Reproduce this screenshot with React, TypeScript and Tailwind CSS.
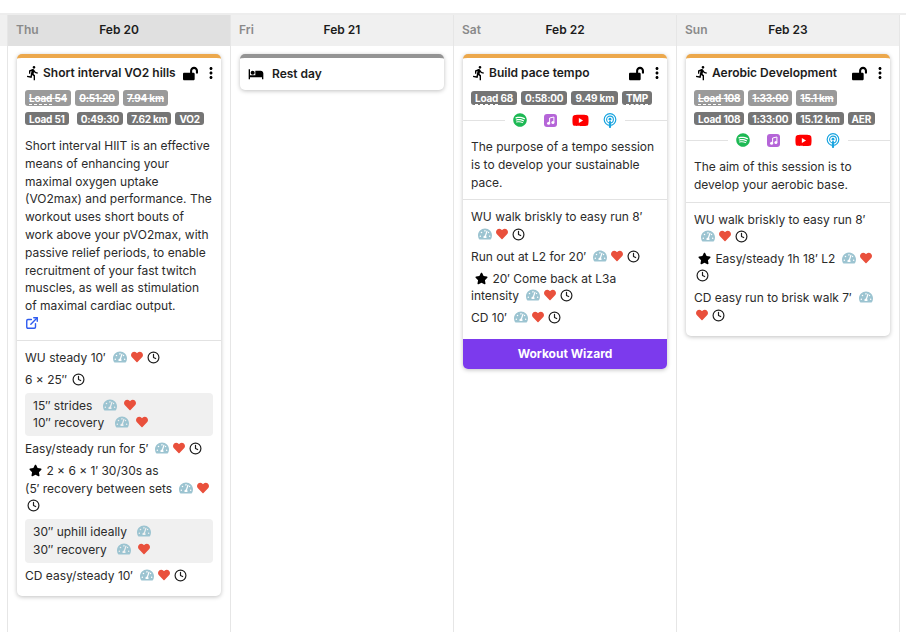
import { ReactNode } from "react";
import { Clock as ClockIcon, ExternalLink } from "lucide-react";
import { FaHeart, FaLockOpen, FaSpotify, FaStar, FaTachometerAlt, FaYoutube } from "react-icons/fa";
import { MdDirectionsRun, MdHotel, MdMoreVert } from "react-icons/md";

interface badge {
  text: string;
  dashed?: boolean;
  extra?: boolean;
}

const Badge = ({ text, old, dashed, extra, tall }: badge & { old?: boolean; tall?: boolean }) => (
  <span
    className={`inline-flex items-center overflow-hidden rounded-[3px] px-[4px] text-[10px] font-bold leading-none tracking-[-0.2px] text-white ${
      old ? "h-[16px] bg-[#9a9a9a] line-through" : "bg-[#757575]"
    } ${!old && tall ? "h-[14px]" : ""} ${!old && !tall ? "h-[13px]" : ""} ${extra ? "mr-[4px]" : ""}`}
  >
    {dashed ? (
      <span className="relative">
        {text.split(" ")[0]}
        <span className="absolute bottom-[-2px] left-0 w-full border-b border-dashed border-white" />
      </span>
    ) : (
      text.split(" ")[0]
    )}
    {text.includes(" ") ? <span className="whitespace-pre"> {text.split(" ").slice(1).join(" ")}</span> : null}
  </span>
);

const Gauge = () => <FaTachometerAlt className="ml-[7px] mr-[2px] inline-block align-[-2px] text-[14px] text-[#9cc4d1]" />;
const Heart = () => <FaHeart className="mx-[2px] inline-block align-[-1px] text-[12px] text-[#e9503c]" />;
const Clock = () => <ClockIcon size={13} strokeWidth={2.2} className="mx-[2px] inline-block align-[-2px] text-[#1f1f1f]" />;
const Star = () => <FaStar className="ml-[4px] mr-[1px] inline-block align-[-2px] text-[13px] text-black" />;

const Step = ({ children, g, h, c }: { children: ReactNode; g?: boolean; h?: boolean; c?: boolean }) => (
  <div className="mt-[4.4px] leading-[17.5px] first:mt-0">
    {children}
    {g ? <Gauge /> : null}
    {h ? <Heart /> : null}
    {c ? <Clock /> : null}
  </div>
);

const Group = ({ children }: { children: ReactNode }) => (
  <div className="mb-[3px] mt-[4.5px] rounded-[4px] bg-[#f0f0f0] px-2 py-[4px]">{children}</div>
);

const Sub = ({ children, g, h }: { children: ReactNode; g?: boolean; h?: boolean }) => (
  <div className="leading-[17.6px]">
    {children} {g ? <Gauge /> : null}
    {h ? <span className="ml-[3px]"><Heart /></span> : null}
  </div>
);

const Media = () => (
  <div className="mb-[11px] mt-[8px] flex h-[14px] items-center">
    <div className="h-px flex-1 bg-[#e2e2e2]" />
    <div className="flex w-[120px] items-center [&>*]:flex [&>*]:w-[30px] [&>*]:justify-center">
      <span>
        <FaSpotify className="text-[14px] text-[#1db954]" />
      </span>
      <span>
        <svg width="13" height="13" viewBox="0 0 13 13">
          <rect width="13" height="13" rx="3" fill="#b565d8" />
          <circle cx="4.6" cy="9.2" r="1.5" fill="#fff" />
          <circle cx="8.9" cy="8.4" r="1.5" fill="#fff" />
          <path d="M5.6 9.2V4l4.3-1v5.4" stroke="#fff" strokeWidth="1" fill="none" />
        </svg>
      </span>
      <span>
        <FaYoutube className="text-[17px] text-[#f00]" />
      </span>
      <span>
        <svg width="14" height="15" viewBox="0 0 14 15" fill="none">
          <circle cx="7" cy="6.5" r="5.8" stroke="#1ba5e0" strokeWidth="1.2" />
          <circle cx="7" cy="6.5" r="3.4" stroke="#1ba5e0" strokeWidth="1.1" />
          <circle cx="7" cy="6.2" r="1.4" fill="#1ba5e0" />
          <rect x="5.9" y="8" width="2.2" height="7" rx="1" fill="#1ba5e0" />
        </svg>
      </span>
    </div>
    <div className="h-px flex-1 bg-[#e2e2e2]" />
  </div>
);

const Card = ({
  title,
  oldBadges,
  badges,
  media,
  about,
  link,
  children,
  wizard,
}: {
  title: string;
  oldBadges?: badge[];
  badges: badge[];
  media?: boolean;
  about: string;
  link?: boolean;
  children: ReactNode;
  wizard?: boolean;
}) => (
  <div className="overflow-hidden rounded-[5px] border-t-4 border-[#eca84c] bg-white shadow-[0_1px_4px_rgba(0,0,0,0.25)]">
    <div className="flex h-[30px] items-center pl-2 pr-px">
      <MdDirectionsRun className="shrink-0 text-[16px] text-black" />
      <div className="ml-[2px] flex-1 truncate text-[12px] font-semibold text-[#1c1c1c]">{title}</div>
      <FaLockOpen className="shrink-0 text-[15px] text-black" />
      <MdMoreVert className="ml-[4px] shrink-0 text-[18px] text-black" />
    </div>
    <div className={`px-2 ${oldBadges ? "pt-[2px]" : "pt-[3px]"}`}>
      {oldBadges ? (
        <div className="mb-[6px] flex gap-[4px]">
          {oldBadges.map((b) => (
            <Badge key={b.text} {...b} old />
          ))}
        </div>
      ) : null}
      <div className="flex gap-[4px]">
        {badges.map((b) => (
          <Badge key={b.text} {...b} tall={!oldBadges} />
        ))}
      </div>
    </div>
    {media ? <Media /> : <div className="h-[12px]" />}
    <div className={`border-b border-[#e2e2e2] px-2 leading-[17.8px] ${link ? "pb-[10px]" : "pb-[8px]"}`}>
      {about}
      {link ? <ExternalLink size={14} strokeWidth={2.4} className="mt-[1px] block text-[#2f5bf0]" /> : null}
    </div>
    <div className="px-2 pb-[12px] pt-[8px]">{children}</div>
    {wizard ? (
      <div className="flex h-[30px] items-center justify-center bg-[#7c3aed] text-[12px] font-bold text-white">
        Workout Wizard
      </div>
    ) : null}
  </div>
);

const Column = ({ day, date, active, children }: { day: string; date: string; active?: boolean; children?: ReactNode }) => (
  <div className="w-[223px] shrink-0 border-r border-[#e6e6e6]">
    <div className={`flex h-[31px] items-center border-b border-transparent pl-2 ${active ? "bg-[#e0e0e0]" : "bg-[#f0f0f0]"}`}>
      <span className="w-[23px] text-[12px] font-semibold text-[#8a8a8a]">{day}</span>
      <span className="flex-1 pr-[31px] text-center text-[12px] font-semibold text-[#1c1c1c]">{date}</span>
    </div>
    <div className="px-[9px] pt-2">{children}</div>
  </div>
);

const App = () => (
  <div
    className="h-[632px] w-[906px] overflow-hidden bg-white pt-[13px] text-[12px] text-[#2b2b2b]"
    style={{ fontFamily: "Inter, sans-serif" }}
  >
    <div className="flex h-full border-t-2 border-[#ededed]">
      <div className="w-[8px] shrink-0 border-r border-[#e6e6e6]">
        <div className="h-[31px] bg-[#f0f0f0]" />
      </div>
      <Column day="Thu" date="Feb 20" active>
        <Card
          title="Short interval VO2 hills"
          oldBadges={[{ text: "Load 54", dashed: true }, { text: "0:51:20" }, { text: "7.94 km" }]}
          badges={[{ text: "Load 51", dashed: true, extra: true }, { text: "0:49:30" }, { text: "7.62 km" }, { text: "VO2", dashed: true }]}
          about="Short interval HIIT is an effective means of enhancing your maximal oxygen uptake (VO2max) and performance. The workout uses short bouts of work above your pVO2max, with passive relief periods, to enable recruitment of your fast twitch muscles, as well as stimulation of maximal cardiac output."
          link
        >
          <Step g h c>WU steady 10′</Step>
          <Step c>6 × 25″ </Step>
          <Group>
            <Sub g h>15″ strides</Sub>
            <Sub g h>10″ recovery</Sub>
          </Group>
          <Step g h c>Easy/steady run for 5′</Step>
          <Step g h c>
            <Star /> 2 × 6 × 1′ 30/30s as
            <br />
            (5′ recovery between sets
          </Step>
          <Group>
            <Sub g>30″ uphill ideally</Sub>
            <Sub g h>30″ recovery</Sub>
          </Group>
          <Step g h c>CD easy/steady 10′</Step>
        </Card>
      </Column>
      <Column day="Fri" date="Feb 21">
        <div className="overflow-hidden rounded-[5px] border-t-4 border-[#949494] bg-white shadow-[0_1px_4px_rgba(0,0,0,0.25)]">
          <div className="flex h-[32px] items-center pb-px pl-2">
            <MdHotel className="text-[16px] text-black" />
            <span className="ml-2 text-[12px] font-semibold text-[#1c1c1c]">Rest day</span>
          </div>
        </div>
      </Column>
      <Column day="Sat" date="Feb 22">
        <Card
          title="Build pace tempo"
          badges={[{ text: "Load 68", dashed: true }, { text: "0:58:00" }, { text: "9.49 km" }, { text: "TMP", dashed: true }]}
          media
          about="The purpose of a tempo session is to develop your sustainable pace."
          wizard
        >
          <Step g h c>WU walk briskly to easy run 8′</Step>
          <Step g h c>Run out at L2 for 20′</Step>
          <Step g h c>
            <Star /> 20′ Come back at L3a intensity
          </Step>
          <Step g h c>CD 10′</Step>
        </Card>
      </Column>
      <Column day="Sun" date="Feb 23">
        <Card
          title="Aerobic Development"
          oldBadges={[{ text: "Load 108", dashed: true }, { text: "1:33:00" }, { text: "15.1 km" }]}
          badges={[{ text: "Load 108", dashed: true }, { text: "1:33:00" }, { text: "15.12 km" }, { text: "AER", dashed: true }]}
          media
          about="The aim of this session is to develop your aerobic base."
        >
          <Step g h c>WU walk briskly to easy run 8′</Step>
          <Step g h c>
            <Star /> Easy/steady 1h 18′ L2
          </Step>
          <Step g h c>CD easy run to brisk walk 7′</Step>
        </Card>
      </Column>
    </div>
  </div>
);

export default App;
